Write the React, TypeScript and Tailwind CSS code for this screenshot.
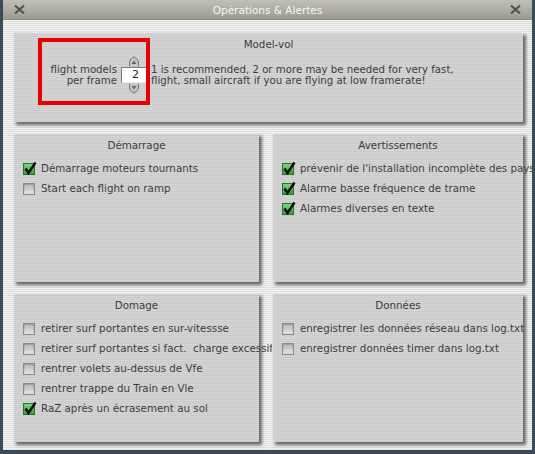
import React from "react";

const font = { fontFamily: '"DejaVu Sans", "Liberation Sans", sans-serif' };

function XIcon() {
  return (
    <svg width="11" height="9" viewBox="0 0 11 9" className="block">
      <path d="M1 0.5 L10 8.5 M10 0.5 L1 8.5" stroke="#505050" strokeWidth="2" fill="none" />
    </svg>
  );
}

function Check({ checked }: { checked: boolean }) {
  if (checked) {
    return (
      <div className="relative w-[12px] h-[12px] shrink-0 border border-[#2f6e2f] bg-[linear-gradient(180deg,#78d878,#30a530)]">
        <svg width="14" height="14" viewBox="0 0 14 14" className="absolute left-[-1px] top-[-3px]">
          <path d="M2.5 7.5 L5.5 12 L12.5 1.5" stroke="#0a0a0a" strokeWidth="2.4" fill="none" strokeLinejoin="miter" />
        </svg>
      </div>
    );
  }
  return (
    <div className="w-[12px] h-[12px] shrink-0 border border-[#8a8a8a] bg-[linear-gradient(180deg,#9a9a9a,#e0e0e0)] p-[1px]">
      <div className="w-full h-full bg-[linear-gradient(180deg,#bdbdbd,#dedede)]" />
    </div>
  );
}

function Row({ checked, label }: { checked: boolean; label: string }) {
  return (
    <div className="h-[20px] flex items-center gap-[6px] whitespace-pre">
      <Check checked={checked} />
      <span>{label}</span>
    </div>
  );
}

const panelCls =
  "bg-[repeating-linear-gradient(180deg,#d4d4d4_0px,#d4d4d4_1px,#cbcbcb_1px,#cbcbcb_2px)] shadow-[3px_3px_3px_rgba(0,0,0,0.55)] border-t border-l border-[#e4e4e4]";

function Panel({ title, rows, h }: { title: string; rows: [boolean, string][]; h: string }) {
  return (
    <div className={`${panelCls} ${h} pt-[4px] px-[9px]`}>
      <div className="text-center leading-[14px]">{title}</div>
      <div className="mt-[7px]">
        {rows.map(([c, l], i) => (
          <Row key={i} checked={c} label={l} />
        ))}
      </div>
    </div>
  );
}

function Arrow({ up }: { up: boolean }) {
  return (
    <svg width="12" height="11" viewBox="0 0 12 11" className="block" style={up ? undefined : { transform: "scaleY(-1)" }}>
      <path d="M1.5 10.5 L1.5 6 Q1.5 3 6 0.8 Q10.5 3 10.5 6 L10.5 10.5" fill="#c4c4c4" stroke="#777" strokeWidth="1" />
      <path d="M3.5 8 L6 4.5 L8.5 8 Z" fill="#666" />
    </svg>
  );
}

export default function App() {
  return (
    <div className="w-[535px] h-[454px] bg-[#3d4a5a] relative overflow-hidden text-[10.3px] text-[#3c3c3c]" style={font}>
      <div className="mx-[3px] h-[450px] flex flex-col bg-[repeating-linear-gradient(180deg,#f3f3f3_0px,#f3f3f3_1px,#dedede_1px,#dedede_2px)]">
        <div className="h-[20px] shrink-0 flex items-center justify-between px-[11px] bg-[linear-gradient(180deg,#c0c0b6,#9c9c92)] border-b border-[#8a8a82]">
          <XIcon />
          <span className="text-[#f6f6f6] leading-[14px] text-[10.5px]">Opérations &amp; Alertes</span>
          <XIcon />
        </div>
        <div className="pt-[12px] pl-[10px] pr-[9px] flex flex-col gap-[11px]">
          <div className={`${panelCls} h-[90px] pt-[4px]`}>
            <div className="text-center leading-[14px]">Model-vol</div>
            <div className="flex items-center mt-[5px] text-[10.2px]">
              <div className="w-[103px] text-right leading-[11px] shrink-0">
                <div>flight models</div>
                <div>per frame</div>
              </div>
              <div className="ml-[4px] w-[26px] flex flex-col items-center shrink-0">
                <Arrow up />
                <div className="w-[26px] h-[16px] bg-white border-t border-l border-[#7a7a7a] border-b border-r border-b-[#e8e8e8] border-r-[#e8e8e8] flex items-center justify-end pr-[7px] text-[11px] text-[#222] leading-[14px]">
                  2
                </div>
                <Arrow up={false} />
              </div>
              <div className="ml-[4px] leading-[11px] whitespace-nowrap">
                <div>1 is recommended, 2 or more may be needed for very fast,</div>
                <div>flight, small aircraft if you are flying at low framerate!</div>
              </div>
            </div>
          </div>
          <div className="grid grid-cols-[246px_251px] gap-x-[13px] gap-y-[11px]">
            <Panel
              title="Démarrage"
              h="h-[149px]"
              rows={[
                [true, "Démarrage moteurs tournants"],
                [false, "Start each flight on ramp"],
              ]}
            />
            <Panel
              title="Avertissements"
              h="h-[149px]"
              rows={[
                [true, "prévenir de l'installation incomplète des pays"],
                [true, "Alarme basse fréquence de trame"],
                [true, "Alarmes diverses en texte"],
              ]}
            />
            <Panel
              title="Domage"
              h="h-[149px]"
              rows={[
                [false, "retirer surf portantes en sur-vitessse"],
                [false, "retirer surf portantes si fact.  charge excessif"],
                [false, "rentrer volets au-dessus de Vfe"],
                [false, "rentrer trappe du Train en Vle"],
                [true, "RaZ après un écrasement au sol"],
              ]}
            />
            <Panel
              title="Données"
              h="h-[149px]"
              rows={[
                [false, "enregistrer les données réseau dans log.txt"],
                [false, "enregistrer données timer dans log.txt"],
              ]}
            />
          </div>
        </div>
      </div>
      <div className="absolute left-[38px] top-[38px] w-[112px] h-[67px] border-[4px] border-[#e60000]" />
    </div>
  );
}
